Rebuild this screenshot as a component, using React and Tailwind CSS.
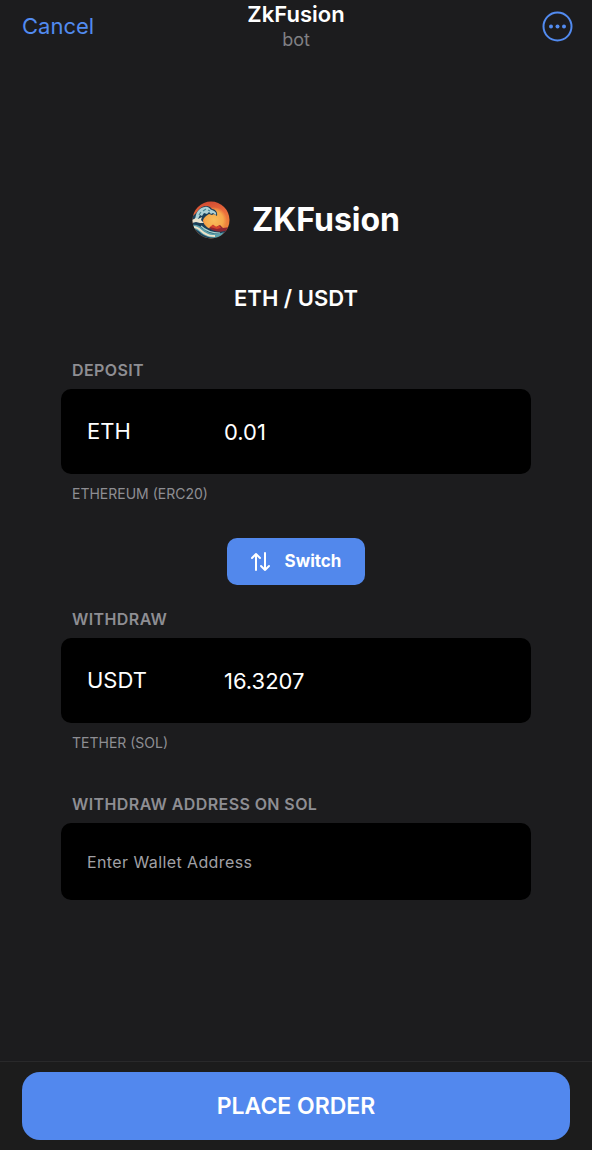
import { useState } from 'react'

function MoreIcon() {
  return (
    <svg className="h-8 w-8" viewBox="0 0 32 32" fill="none">
      <circle cx="15.5" cy="16.5" r="14" stroke="currentColor" strokeWidth="2" />
      <circle cx="9" cy="16.5" r="2" fill="currentColor" />
      <circle cx="15.5" cy="16.5" r="2" fill="currentColor" />
      <circle cx="22" cy="16.5" r="2" fill="currentColor" />
    </svg>
  )
}

function SwitchIcon() {
  return (
    <svg
      className="h-5 w-5"
      viewBox="0 0 20 20"
      fill="none"
      stroke="currentColor"
      strokeWidth="2"
      strokeLinecap="round"
      strokeLinejoin="round"
    >
      <path d="M5 18V2M1 6L5 2L9 6" />
      <path d="M14 1V18M10 14L14 18L18 14" />
    </svg>
  )
}

function WaveLogo() {
  return (
    <svg className="h-[38px] w-[38px]" viewBox="0 0 38 38" aria-hidden="true">
      <defs>
        <clipPath id="disc">
          <circle cx="19" cy="19" r="18.5" />
        </clipPath>
        <linearGradient id="sky" x1="0" y1="0" x2="0.2" y2="1">
          <stop offset="0" stopColor="#c9402f" />
          <stop offset="0.4" stopColor="#ea6b3c" />
          <stop offset="1" stopColor="#ef8f3c" />
        </linearGradient>
        <radialGradient id="sun">
          <stop offset="0" stopColor="#f8bd5c" />
          <stop offset="0.7" stopColor="#f5a84a" />
          <stop offset="1" stopColor="#f5a84a" stopOpacity="0" />
        </radialGradient>
      </defs>
      <g clipPath="url(#disc)">
        <rect width="38" height="38" fill="url(#sky)" />
        <circle cx="22" cy="19" r="13" fill="url(#sun)" />
        <path d="M17 27L21 24L24 26L28 24L31 27L38 26V31L30 33L18 30Z" fill="#8f2732" />
        <path d="M18 26L21 23.5L24 26L27 24.5L29 27L25 28Z" fill="#d3432c" />
        {/* body of the wave, hollow under the crest */}
        <path
          d="M0 15C4 14 6 8 10 6C14 4 18 5 20 8C23 8 26 11 25 15L22 13L20 14L17 13C14 15 11 17 11 20C12 25 17 28 23 30C27 31 32 31 35 29L33 38H0Z"
          fill="#1b3f58"
        />
        <path
          d="M4 14C5 10 9 6 13 6C17 5 18 9 20 9C23 10 25 12 24 14L21 12L19 13L17 11L15 13L12 12L10 15L8 14L6 18L3 18Z"
          fill="#add0d4"
        />
        <path d="M0 19L4 17L6 18L10 16L9 19L12 22L8 22L4 21L0 22Z" fill="#e9e2cc" />
        <path d="M1 24C7 23 10 28 16 31C21 33 27 33 32 31L29 35C23 38 16 37 10 33C7 30 4 28 1 28Z" fill="#5b9faa" />
        <path d="M2 26C7 26 9 31 14 33C17 35 20 35 23 35" fill="none" stroke="#ece2c8" strokeWidth="2" />
        <path d="M9 25C13 29 19 32 28 32" fill="none" stroke="#a5d2ce" strokeWidth="1.2" />
        <path d="M7 14L9 11M11 10L14 8M16 9L18 10" stroke="#4a8795" strokeWidth="1.2" />
      </g>
    </svg>
  )
}

function AmountField({ id, label, token, network, value, onChange }) {
  return (
    <div>
      <label htmlFor={id} className="block pl-[11px] text-base font-semibold leading-5 tracking-wide text-[#8e8e93]">
        {label}
      </label>
      <div className="mt-[9px] flex h-[85px] items-center rounded-[10px] bg-black px-[26px] text-[22px] text-white">
        <span className="w-[137px] shrink-0">{token}</span>
        <input
          id={id}
          type="text"
          inputMode="decimal"
          value={value}
          onChange={(e) => onChange(e.target.value)}
          className="h-full w-full min-w-0 bg-transparent outline-none"
        />
      </div>
      <p className="mt-2.5 pl-[11px] text-sm leading-5 text-[#8e8e93]">{network}</p>
    </div>
  )
}

export default function App() {
  const [deposit, setDeposit] = useState('0.01')
  const [withdraw, setWithdraw] = useState('16.3207')
  const [address, setAddress] = useState('')

  return (
    <div className="flex min-h-screen flex-col bg-[#1c1c1e] font-['Inter',sans-serif] text-white">
      <header className="grid grid-cols-3 items-center px-[18px]">
        <button className="justify-self-start pl-1 text-[22px] text-[#528bf0]">Cancel</button>
        <div className="text-center">
          <h1 className="text-[22px] font-semibold leading-7">ZkFusion</h1>
          <p className="text-lg leading-6 text-[#808084]">bot</p>
        </div>
        <button className="justify-self-end text-[#528bf0]" aria-label="More">
          <MoreIcon />
        </button>
      </header>

      <main className="flex flex-1 flex-col px-[61px] pt-[148px] pb-10">
        <div className="flex items-center justify-center gap-[22px]">
          <WaveLogo />
          <h2 className="text-[32px] font-bold leading-10">ZKFusion</h2>
        </div>
        <p className="mt-11 text-center text-[22px] font-semibold leading-7">ETH / USDT</p>

        <div className="mt-12">
          <AmountField
            id="deposit"
            label="DEPOSIT"
            token="ETH"
            network="ETHEREUM (ERC20)"
            value={deposit}
            onChange={setDeposit}
          />
        </div>

        <button className="mt-[34px] flex h-[47px] items-center gap-3.5 self-center rounded-[10px] bg-[#5288ec] px-6 text-[17px] font-bold">
          <SwitchIcon />
          Switch
        </button>

        <div className="mt-6">
          <AmountField
            id="withdraw"
            label="WITHDRAW"
            token="USDT"
            network="TETHER (SOL)"
            value={withdraw}
            onChange={setWithdraw}
          />
        </div>

        <div className="mt-[41px]">
          <label htmlFor="address" className="block pl-[11px] text-base font-semibold leading-5 tracking-wide text-[#8e8e93]">
            WITHDRAW ADDRESS ON SOL
          </label>
          <input
            id="address"
            type="text"
            placeholder="Enter Wallet Address"
            value={address}
            onChange={(e) => setAddress(e.target.value)}
            className="mt-[9px] block h-[77px] w-full rounded-[10px] bg-black px-[26px] text-base tracking-wide text-white outline-none placeholder:text-[#a1a1a6]"
          />
        </div>
      </main>

      <footer className="border-t border-[#29292a] bg-[#1c1c1c] px-[22px] py-2.5">
        <button className="h-[68px] w-full rounded-[18px] bg-[#5288ee] text-[23px] font-semibold">PLACE ORDER</button>
      </footer>
    </div>
  )
}
